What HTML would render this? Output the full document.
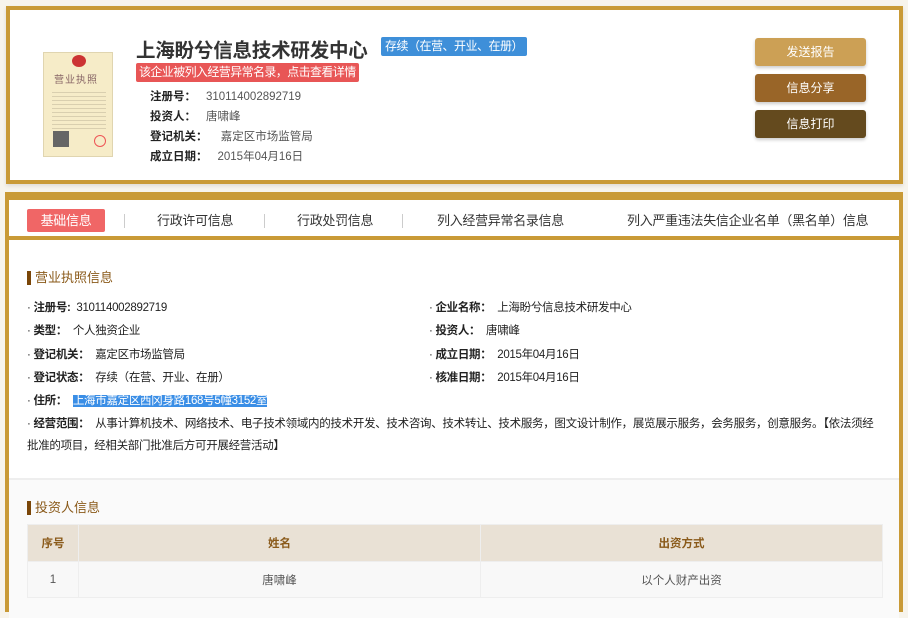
<!DOCTYPE html>
<html><head><meta charset="utf-8"><style>
*{margin:0;padding:0;box-sizing:border-box}
body{width:908px;height:602px;background:#f7f4ec;font-family:"Liberation Sans","Noto Sans CJK SC",sans-serif;overflow:hidden;position:relative;color:#333}
.p1{position:absolute;left:6px;top:6px;width:897px;height:178px;border:4px solid #c99a36;background:#fff;box-shadow:0 2px 4px rgba(0,0,0,.1)}
.lic{position:absolute;left:33px;top:42px;width:70px;height:105px;background:#f6ecc8;border:1px solid #e0d5b0}
.title{position:absolute;left:126px;top:24px;font-size:19.5px;font-weight:bold;color:#333;letter-spacing:-0.2px}
.st{position:absolute;left:371px;top:27px;background:#3e8fd9;color:#fff;font-size:12px;padding:0 4px;border-radius:2px;height:19px;line-height:19px;letter-spacing:-0.5px}
.warn{position:absolute;left:126px;top:53px;background:#e85656;color:#fff;font-size:12px;padding:0 3px;border-radius:2px;height:19px;line-height:19px;letter-spacing:-0.6px}
.kv{position:absolute;left:140px;font-size:11.5px;color:#555}
.kv b{color:#222;margin-right:10px}
.btn{position:absolute;left:745px;width:111px;height:28px;border-radius:3px;color:#fff;font-size:12px;text-align:center;line-height:28px;box-shadow:0 2px 3px rgba(0,0,0,.2)}
.p2{position:absolute;left:5px;top:192px;width:898px;height:420px;border:4px solid #c99a36;border-top-width:8px;background:#fff}
.tabs{height:40px;border-bottom:4px solid #c99a36;position:relative}
.tab{position:absolute;top:9px;font-size:13px;color:#333;height:23px;line-height:23px;letter-spacing:-0.3px}
.tab.on{background:#f06666;color:#fff;border-radius:2px;width:78px;text-align:center;left:18px}
.sep{position:absolute;top:14px;width:1px;height:14px;background:#ccc}
.h{position:absolute;font-size:13px;color:#8a5a1a;border-left:4px solid #7a4608;padding-left:4px;line-height:14px}
.r{position:absolute;font-size:11.5px;color:#222;letter-spacing:-0.3px}
.r b{font-weight:bold}
.sel{background:#3a8ee6;color:#fff}
.gray{position:absolute;left:0;top:278px;width:890px;height:140px;background:#fafafa;border-top:2px solid #eee}
table{position:absolute;left:18px;top:324px;width:856px;border-collapse:collapse;font-size:11.5px}
th{background:#e9e1d5;color:#8a5a1a;height:37px;border:1px solid #eee;font-weight:bold}
td{height:36px;text-align:center;color:#555;border:1px solid #eee;background:#f8f8f8}
</style></head><body>
<div class="p1">
 <div class="lic">
  <div style="position:absolute;left:28px;top:2px;width:14px;height:12px;border-radius:50%;background:#c33"></div>
  <div style="position:absolute;left:10px;top:18px;font-size:10px;color:#866;letter-spacing:1px">营业执照</div>
  <div style="position:absolute;left:8px;top:36px;width:54px;height:40px;background:repeating-linear-gradient(#f6ecc8 0 3px,#d9cfaf 3px 4px)"></div>
  <div style="position:absolute;left:9px;top:78px;width:16px;height:16px;background:#666"></div>
  <div style="position:absolute;left:50px;top:82px;width:12px;height:12px;border-radius:50%;border:1px solid #e55"></div>
 </div>
 <div class="title">上海盼兮信息技术研发中心</div>
 <div class="st">存续（在营、开业、在册）</div>
 <div class="warn">该企业被列入经营异常名录，点击查看详情</div>
 <div class="kv" style="top:78px"><b>注册号：</b>310114002892719</div>
 <div class="kv" style="top:98px"><b>投资人：</b>唐啸峰</div>
 <div class="kv" style="top:118px"><b>登记机关：</b> 嘉定区市场监管局</div>
 <div class="kv" style="top:138px"><b>成立日期：</b>2015年04月16日</div>
 <div class="btn" style="top:28px;background:#cca055">发送报告</div>
 <div class="btn" style="top:64px;background:#996528">信息分享</div>
 <div class="btn" style="top:100px;background:#644a1e">信息打印</div>
</div>
<div class="p2">
 <div class="tabs">
  <div class="tab on">基础信息</div><div class="sep" style="left:115px"></div>
  <div class="tab" style="left:148px">行政许可信息</div><div class="sep" style="left:255px"></div>
  <div class="tab" style="left:288px">行政处罚信息</div><div class="sep" style="left:393px"></div>
  <div class="tab" style="left:428px">列入经营异常名录信息</div>
  <div class="tab" style="left:618px">列入严重违法失信企业名单（黑名单）信息</div>
 </div>
 <div class="h" style="left:18px;top:71px">营业执照信息</div>
 <div class="r" style="left:18px;top:99px">· <b>注册号:</b>&nbsp; 310114002892719</div>
 <div class="r" style="left:420px;top:99px">· <b>企业名称：</b>&nbsp; 上海盼兮信息技术研发中心</div>
 <div class="r" style="left:18px;top:122px">· <b>类型：</b>&nbsp; 个人独资企业</div>
 <div class="r" style="left:420px;top:122px">· <b>投资人：</b>&nbsp; 唐啸峰</div>
 <div class="r" style="left:18px;top:146px">· <b>登记机关：</b>&nbsp; 嘉定区市场监管局</div>
 <div class="r" style="left:420px;top:146px">· <b>成立日期：</b>&nbsp; 2015年04月16日</div>
 <div class="r" style="left:18px;top:169px">· <b>登记状态：</b>&nbsp; 存续（在营、开业、在册）</div>
 <div class="r" style="left:420px;top:169px">· <b>核准日期：</b>&nbsp; 2015年04月16日</div>
 <div class="r" style="left:18px;top:192px">· <b>住所：</b>&nbsp; <span class="sel">上海市嘉定区西冈身路168号5幢3152室</span></div>
 <div class="r" style="left:18px;top:213px;width:848px;line-height:22px;letter-spacing:-0.3px">· <b>经营范围：</b>&nbsp; 从事计算机技术、网络技术、电子技术领域内的技术开发、技术咨询、技术转让、技术服务，图文设计制作，展览展示服务，会务服务，创意服务。【依法须经批准的项目，经相关部门批准后方可开展经营活动】</div>
 <div class="gray"></div>
 <div class="h" style="left:18px;top:301px">投资人信息</div>
 <table><tr><th style="width:51px">序号</th><th style="width:402px">姓名</th><th>出资方式</th></tr>
 <tr><td>1</td><td>唐啸峰</td><td>以个人财产出资</td></tr></table>
</div>
</body></html>
